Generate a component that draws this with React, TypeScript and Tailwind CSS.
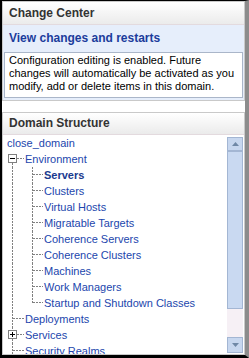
import React from 'react';

type Kind = 'root' | 'minus' | 'plus' | 'mid1' | 'mid2' | 'last2';

const TREE: { label: string; kind: Kind; bold?: boolean }[] = [
  { label: 'close_domain', kind: 'root' },
  { label: 'Environment', kind: 'minus' },
  { label: 'Servers', kind: 'mid2', bold: true },
  { label: 'Clusters', kind: 'mid2' },
  { label: 'Virtual Hosts', kind: 'mid2' },
  { label: 'Migratable Targets', kind: 'mid2' },
  { label: 'Coherence Servers', kind: 'mid2' },
  { label: 'Coherence Clusters', kind: 'mid2' },
  { label: 'Machines', kind: 'mid2' },
  { label: 'Work Managers', kind: 'mid2' },
  { label: 'Startup and Shutdown Classes', kind: 'last2' },
  { label: 'Deployments', kind: 'mid1' },
  { label: 'Services', kind: 'plus' },
  { label: 'Security Realms', kind: 'mid1' },
];

const LINE = { stroke: '#808080', strokeWidth: 1, strokeDasharray: '2 1' };

// connector drawing for one tree row (16px tall)
function Connector({ kind }: { kind: Kind }) {
  if (kind === 'root') return <div className="w-[3px]" />;
  const twoLevels = kind === 'mid2' || kind === 'last2';
  return (
    <svg width={twoLevels ? 40 : 21} height={16} className="shrink-0">
      {kind === 'minus' && (
        <>
          <line x1={9.5} y1={12} x2={9.5} y2={16} {...LINE} />
          <line x1={14} y1={7.5} x2={21} y2={7.5} {...LINE} />
          <rect x={5.5} y={3.5} width={8} height={8} fill="#fff" stroke="#808080" />
          <line x1={7} y1={7.5} x2={12} y2={7.5} stroke="#000" />
        </>
      )}
      {kind === 'plus' && (
        <>
          <line x1={9.5} y1={0} x2={9.5} y2={3} {...LINE} />
          <line x1={9.5} y1={12} x2={9.5} y2={16} {...LINE} />
          <line x1={14} y1={7.5} x2={21} y2={7.5} {...LINE} />
          <rect x={5.5} y={3.5} width={8} height={8} fill="#fff" stroke="#808080" />
          <line x1={7} y1={7.5} x2={12} y2={7.5} stroke="#000" />
          <line x1={9.5} y1={5} x2={9.5} y2={10} stroke="#000" />
        </>
      )}
      {kind === 'mid1' && (
        <>
          <line x1={9.5} y1={0} x2={9.5} y2={16} {...LINE} />
          <line x1={10} y1={7.5} x2={21} y2={7.5} {...LINE} />
        </>
      )}
      {twoLevels && (
        <>
          <line x1={9.5} y1={0} x2={9.5} y2={16} {...LINE} />
          <line x1={29.5} y1={0} x2={29.5} y2={kind === 'last2' ? 8 : 16} {...LINE} />
          <line x1={30} y1={7.5} x2={40} y2={7.5} {...LINE} />
        </>
      )}
    </svg>
  );
}

function Arrow({ up }: { up?: boolean }) {
  return (
    <svg width={7} height={4} viewBox="0 0 7 4">
      <polygon points={up ? '0,4 7,4 3.5,0' : '0,0 7,0 3.5,4'} fill="#6f88a6" />
    </svg>
  );
}

export default function App() {
  return (
    <div
      className="w-[249px] h-[358px] overflow-hidden bg-white flex flex-col border-t border-l-2 border-b-[3px] border-r-[4px] border-black border-r-[#8c8c8c] text-[11px] leading-[13px] text-black"
      style={{ fontFamily: '"Liberation Sans", Arial, sans-serif' }}
    >
      {/* ── Change Center ── */}
      <div className="border border-[#c9c9c9] flex flex-col">
        <div className="h-[23px] border-b border-[#e3dade] bg-linear-to-b from-white to-[#ebebeb] flex items-center px-[6px]">
          <span className="text-[12px] font-bold text-[#333]">Change Center</span>
        </div>
        <div className="bg-[#e6eefb] px-[1px] pb-[2px]">
          <div className="h-[26px] flex items-center px-[5px]">
            <span className="text-[12px] font-bold text-[#1b3c9c]">View changes and restarts</span>
          </div>
          <div className="mt-[1px] h-[46px] bg-white border border-[#aab6c9] pl-[4px] pt-[1px]">
            Configuration editing is enabled. Future<br />
            changes will automatically be activated as you<br />
            modify, add or delete items in this domain.
          </div>
        </div>
      </div>

      {/* ── Domain Structure ── */}
      <div className="mt-[11px] flex-1 min-h-0 border border-[#c9c9c9] flex flex-col">
        <div className="h-[22px] shrink-0 border-b border-[#e3dade] bg-linear-to-b from-white to-[#ebebeb] flex items-center px-[6px]">
          <span className="text-[12px] font-bold text-[#333]">Domain Structure</span>
        </div>
        <div className="flex-1 min-h-0 flex">
          <div className="flex-1 overflow-hidden">
            {TREE.map((row) => (
              <div key={row.label} className="h-[16px] flex items-center whitespace-nowrap">
                <Connector kind={row.kind} />
                <span className={`pl-[1px] ${row.bold ? 'font-bold text-[#1a3a8e]' : 'text-[#2246ad]'}`}>
                  {row.label}
                </span>
              </div>
            ))}
          </div>
          {/* scrollbar */}
          <div className="w-[16px] mr-[1px] mt-[2px] mb-[1px] flex flex-col">
            <div className="h-[14px] bg-[#c7d7ef] border border-[#a3b6d3] flex items-center justify-center">
              <Arrow up />
            </div>
            <div className="h-[158px] bg-[#c9d9f1] border border-[#a3b6d3]" />
            <div className="flex-1 bg-[#f6f0f5]" />
            <div className="h-[16px] bg-[#c7d7ef] border border-[#a3b6d3] flex items-center justify-center">
              <Arrow />
            </div>
          </div>
        </div>
      </div>
    </div>
  );
}
